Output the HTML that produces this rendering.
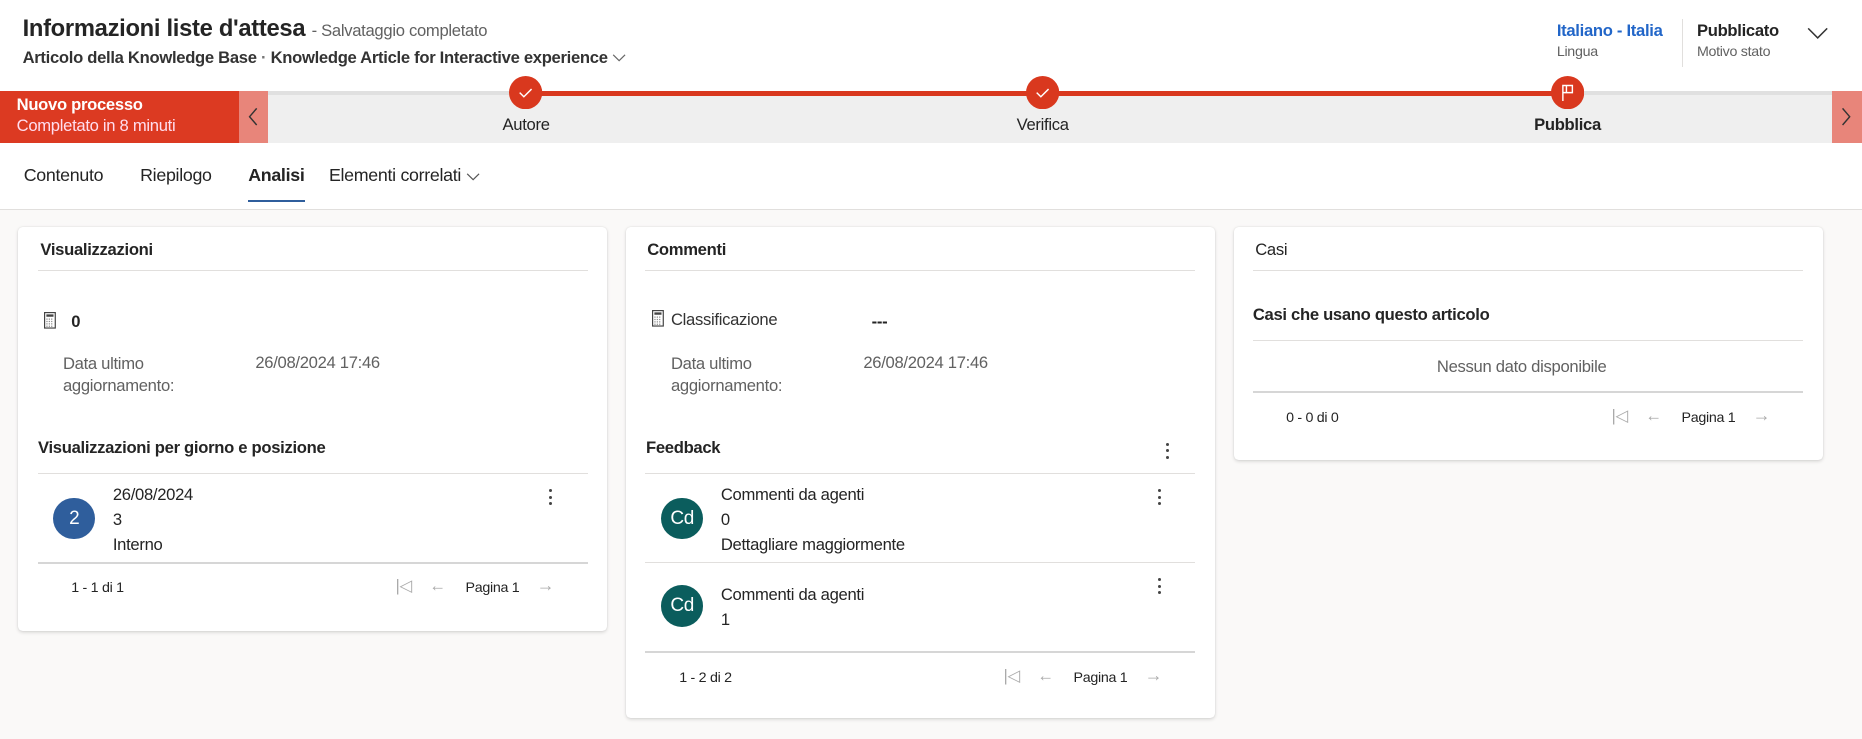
<!DOCTYPE html>
<html><head><meta charset="utf-8"><style>
*{box-sizing:border-box;margin:0;padding:0}
html,body{width:1862px;height:739px;overflow:hidden;background:#faf9f8}
#r{zoom:1.1875;width:1568px;height:623px;position:relative;font-family:"Segoe UI","Liberation Sans",sans-serif;color:#242424;letter-spacing:-0.25px}
.a{position:absolute;white-space:nowrap}
.card{position:absolute;background:#fff;border-radius:4px;box-shadow:0 1px 3px rgba(0,0,0,.14),0 0 1px rgba(0,0,0,.1)}
.hl{position:absolute;height:1px;background:#e1dfdd}
.g{color:#616161}
.dots{position:absolute;width:3px}
.dots i{display:block;width:2.5px;height:2.5px;border-radius:50%;background:#444;margin-bottom:3px}
.av{position:absolute;width:35px;height:35px;border-radius:50%;color:#fff;font-size:16px;text-align:center;line-height:35px}
</style></head><body><div id="r">
<div style="position:absolute;left:0;top:0;width:1568px;height:176px;background:#fff"></div>
<div class="a" style="left:19px;top:13px;font-size:20px;font-weight:600">Informazioni liste d'attesa <span style="font-size:14px;font-weight:400;color:#616161">- Salvataggio completato</span></div>
<div class="a" style="left:19px;top:40px;font-size:14px;font-weight:600;color:#333">Articolo della Knowledge Base <span style="color:#777">·</span> Knowledge Article for Interactive experience <svg width="12" height="8" viewBox="0 0 12 8"><path d="M1 1.5l5 5 5-5" fill="none" stroke="#666" stroke-width="1"/></svg></div>
<div class="a" style="left:1311px;top:18px;font-size:14px;font-weight:600;color:#2266c8">Italiano - Italia</div>
<div class="a g" style="left:1311px;top:37px;font-size:12px">Lingua</div>
<div style="position:absolute;left:1416px;top:16px;width:1px;height:40px;background:#e1dfdd"></div>
<div class="a" style="left:1429px;top:18px;font-size:14px;font-weight:600">Pubblicato</div>
<div class="a g" style="left:1429px;top:37px;font-size:12px">Motivo stato</div>
<svg class="a" style="left:1522px;top:22px" width="18" height="12" viewBox="0 0 18 12"><path d="M1 2l8 8 8-8" fill="none" stroke="#333" stroke-width="1.3"/></svg>

<div style="position:absolute;left:0;top:77px;width:1568px;height:43px;background:#efefef;border-top:4px solid #e0e0e0"></div>
<div style="position:absolute;left:0;top:77px;width:201px;height:43px;background:#dc3a22"></div>
<div class="a" style="left:14px;top:80px;font-size:14px;font-weight:600;color:#fff">Nuovo processo</div>
<div class="a" style="left:14px;top:98px;font-size:14px;color:#fde">Completato in 8 minuti</div>
<div style="position:absolute;left:201px;top:77px;width:25px;height:43px;background:#e8857a"></div>
<svg class="a" style="left:207px;top:89px" width="12" height="18" viewBox="0 0 12 18"><path d="M9 2l-6 7 6 7" fill="none" stroke="#333" stroke-width="1.2"/></svg>
<div style="position:absolute;left:1543px;top:77px;width:25px;height:43px;background:#e8857a"></div>
<svg class="a" style="left:1549px;top:89px" width="12" height="18" viewBox="0 0 12 18"><path d="M3 2l6 7-6 7" fill="none" stroke="#333" stroke-width="1.2"/></svg>
<div style="position:absolute;left:443px;top:77px;width:877px;height:4px;background:#d9381e"></div>
<svg class="a" style="left:429px;top:64px" width="28" height="28"><circle cx="14" cy="14" r="14" fill="#d9381e"/><path d="M9 14l3.5 3.5L19 11" fill="none" stroke="#fff" stroke-width="1.2"/></svg>
<svg class="a" style="left:864px;top:64px" width="28" height="28"><circle cx="14" cy="14" r="14" fill="#d9381e"/><path d="M9 14l3.5 3.5L19 11" fill="none" stroke="#fff" stroke-width="1.2"/></svg>
<svg class="a" style="left:1306px;top:64px" width="28" height="28"><circle cx="14" cy="14" r="14" fill="#d9381e"/><path d="M10 21V8h8v6h-8" fill="none" stroke="#fff" stroke-width="1.2"/><path d="M13 8v6" stroke="#fff" stroke-width="1.2"/></svg>
<div class="a" style="left:443px;top:97px;font-size:14px;transform:translateX(-50%)">Autore</div>
<div class="a" style="left:878px;top:97px;font-size:14px;transform:translateX(-50%)">Verifica</div>
<div class="a" style="left:1320px;top:97px;font-size:14px;font-weight:700;transform:translateX(-50%)">Pubblica</div>

<div class="a" style="left:20px;top:139px;font-size:15px">Contenuto</div>
<div class="a" style="left:118px;top:139px;font-size:15px">Riepilogo</div>
<div class="a" style="left:209px;top:139px;font-size:15px;font-weight:600">Analisi</div>
<div class="a" style="left:277px;top:139px;font-size:15px">Elementi correlati <svg width="12" height="8" viewBox="0 0 12 8"><path d="M1 1.5l5 5 5-5" fill="none" stroke="#555" stroke-width="1"/></svg></div>
<div style="position:absolute;left:209px;top:168px;width:48px;height:2px;background:#2f5e9c"></div>
<div style="position:absolute;left:0;top:176px;width:1568px;height:1px;background:#e1dfdd"></div>

<!-- card 1 -->
<div class="card" style="left:15px;top:191px;width:496px;height:340px"></div>
<div class="a" style="left:34px;top:202px;font-size:14px;font-weight:600">Visualizzazioni</div>
<div class="hl" style="left:32px;top:227px;width:463px"></div>
<svg class="a" style="left:37px;top:263px" width="10" height="14" viewBox="0 0 10 14"><rect x=".5" y=".5" width="9" height="13" fill="none" stroke="#444"/><rect x="2" y="2" width="6" height="2" fill="#444"/><path d="M2 6h6M2 8h6M2 10h6M2 12h6" stroke="#888" stroke-dasharray="1 1"/></svg>
<div class="a" style="left:60px;top:263px;font-size:14px;font-weight:600">0</div>
<div class="a g" style="left:53px;top:297px;font-size:14px;line-height:19px">Data ultimo<br>aggiornamento:</div>
<div class="a g" style="left:215px;top:297px;font-size:14px">26/08/2024 17:46</div>
<div class="a" style="left:32px;top:369px;font-size:14px;font-weight:600">Visualizzazioni per giorno e posizione</div>
<div class="hl" style="left:32px;top:398px;width:463px"></div>
<div class="av" style="left:45px;top:419px;background:#2f5e9c;line-height:35px">2</div>
<div class="a" style="left:95px;top:407px;font-size:14px;line-height:21px">26/08/2024<br>3<br>Interno</div>
<div class="dots" style="left:462px;top:412px"><i></i><i></i><i></i></div>
<div style="position:absolute;left:32px;top:473px;width:463px;height:2px;background:#d6d6d6"></div>
<div class="a" style="left:60px;top:488px;font-size:12px">1 - 1 di 1</div>
<div class="a" style="left:333px;top:485px;font-size:14px;color:#aaa">|◁&nbsp;&nbsp;&nbsp;&nbsp;←</div>
<div class="a" style="left:392px;top:488px;font-size:12px">Pagina 1</div>
<div class="a" style="left:452px;top:484px;font-size:15px;color:#aaa">→</div>

<!-- card 2 -->
<div class="card" style="left:527px;top:191px;width:496px;height:414px"></div>
<div class="a" style="left:545px;top:202px;font-size:14px;font-weight:600">Commenti</div>
<div class="hl" style="left:543px;top:227px;width:463px"></div>
<svg class="a" style="left:549px;top:261px" width="10" height="14" viewBox="0 0 10 14"><rect x=".5" y=".5" width="9" height="13" fill="none" stroke="#444"/><rect x="2" y="2" width="6" height="2" fill="#444"/><path d="M2 6h6M2 8h6M2 10h6M2 12h6" stroke="#888" stroke-dasharray="1 1"/></svg>
<div class="a" style="left:565px;top:261px;font-size:14px;color:#333">Classificazione</div>
<div class="a" style="left:734px;top:263px;font-size:14px;font-weight:600">---</div>
<div class="a g" style="left:565px;top:297px;font-size:14px;line-height:19px">Data ultimo<br>aggiornamento:</div>
<div class="a g" style="left:727px;top:297px;font-size:14px">26/08/2024 17:46</div>
<div class="a" style="left:544px;top:369px;font-size:14px;font-weight:600">Feedback</div>
<div class="dots" style="left:982px;top:373px"><i></i><i></i><i></i></div>
<div class="hl" style="left:543px;top:398px;width:463px"></div>
<div class="av" style="left:557px;top:419px;background:#0b5d5d">Cd</div>
<div class="a" style="left:607px;top:407px;font-size:14px;line-height:21px">Commenti da agenti<br>0<br>Dettagliare maggiormente</div>
<div class="dots" style="left:975px;top:412px"><i></i><i></i><i></i></div>
<div class="hl" style="left:543px;top:473px;width:463px"></div>
<div class="av" style="left:557px;top:493px;background:#0b5d5d">Cd</div>
<div class="a" style="left:607px;top:491px;font-size:14px;line-height:21px">Commenti da agenti<br>1</div>
<div class="dots" style="left:975px;top:487px"><i></i><i></i><i></i></div>
<div style="position:absolute;left:543px;top:548px;width:463px;height:2px;background:#d6d6d6"></div>
<div class="a" style="left:572px;top:564px;font-size:12px">1 - 2 di 2</div>
<div class="a" style="left:845px;top:561px;font-size:14px;color:#aaa">|◁&nbsp;&nbsp;&nbsp;&nbsp;←</div>
<div class="a" style="left:904px;top:564px;font-size:12px">Pagina 1</div>
<div class="a" style="left:964px;top:560px;font-size:15px;color:#aaa">→</div>

<!-- card 3 -->
<div class="card" style="left:1039px;top:191px;width:496px;height:196px"></div>
<div class="a" style="left:1057px;top:202px;font-size:14px;font-weight:400">Casi</div>
<div class="hl" style="left:1055px;top:227px;width:463px"></div>
<div class="a" style="left:1055px;top:257px;font-size:14px;font-weight:600">Casi che usano questo articolo</div>
<div class="hl" style="left:1055px;top:286px;width:463px"></div>
<div class="a g" style="left:1210px;top:301px;font-size:14px">Nessun dato disponibile</div>
<div style="position:absolute;left:1055px;top:329px;width:463px;height:2px;background:#d6d6d6"></div>
<div class="a" style="left:1083px;top:345px;font-size:12px">0 - 0 di 0</div>
<div class="a" style="left:1357px;top:342px;font-size:14px;color:#aaa">|◁&nbsp;&nbsp;&nbsp;&nbsp;←</div>
<div class="a" style="left:1416px;top:345px;font-size:12px">Pagina 1</div>
<div class="a" style="left:1476px;top:341px;font-size:15px;color:#aaa">→</div>
</div></body></html>
